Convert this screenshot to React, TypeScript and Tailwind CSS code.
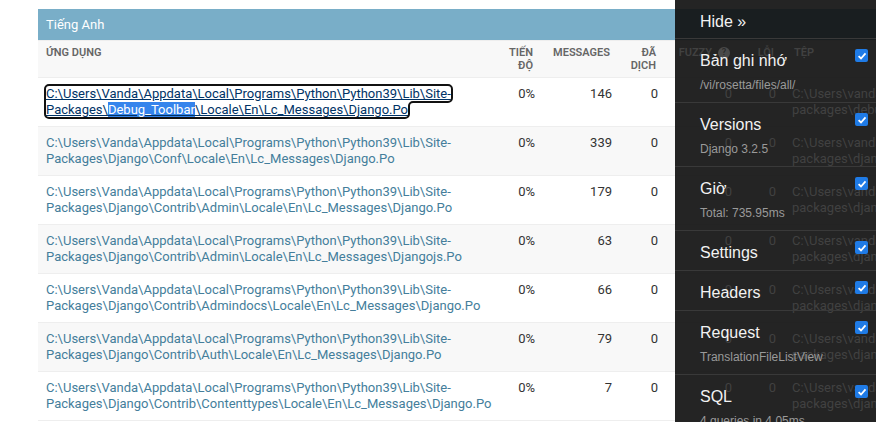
import React from "react";

type Row = {
  line1: string;
  line2: string;
  messages: number;
  lower1: string;
  lower2: string;
};

const prefix = "C:\\Users\\Vanda\\Appdata\\Local\\Programs\\Python\\Python39\\Lib\\Site-";
const lowerPrefix = "C:\\Users\\vanda\\appdata\\local\\programs\\python\\python39\\lib\\site-";

const rows: Row[] = [
  { line1: prefix, line2: "Packages\\Debug_Toolbar\\Locale\\En\\Lc_Messages\\Django.Po", messages: 146, lower1: lowerPrefix, lower2: "packages\\debug_toolbar\\locale\\en\\lc_messages\\django.po" },
  { line1: prefix, line2: "Packages\\Django\\Conf\\Locale\\En\\Lc_Messages\\Django.Po", messages: 339, lower1: lowerPrefix, lower2: "packages\\django\\conf\\locale\\en\\lc_messages\\django.po" },
  { line1: prefix, line2: "Packages\\Django\\Contrib\\Admin\\Locale\\En\\Lc_Messages\\Django.Po", messages: 179, lower1: lowerPrefix, lower2: "packages\\django\\contrib\\admin\\locale\\en\\lc_messages\\django.po" },
  { line1: prefix, line2: "Packages\\Django\\Contrib\\Admin\\Locale\\En\\Lc_Messages\\Djangojs.Po", messages: 63, lower1: lowerPrefix, lower2: "packages\\django\\contrib\\admin\\locale\\en\\lc_messages\\djangojs.po" },
  { line1: prefix, line2: "Packages\\Django\\Contrib\\Admindocs\\Locale\\En\\Lc_Messages\\Django.Po", messages: 66, lower1: lowerPrefix, lower2: "packages\\django\\contrib\\admindocs\\locale\\en\\lc_messages\\django.po" },
  { line1: prefix, line2: "Packages\\Django\\Contrib\\Auth\\Locale\\En\\Lc_Messages\\Django.Po", messages: 79, lower1: lowerPrefix, lower2: "packages\\django\\contrib\\auth\\locale\\en\\lc_messages\\django.po" },
  { line1: prefix, line2: "Packages\\Django\\Contrib\\Contenttypes\\Locale\\En\\Lc_Messages\\Django.Po", messages: 7, lower1: lowerPrefix, lower2: "packages\\django\\contrib\\contenttypes\\locale\\en\\lc_messages\\django.po" },
];

const panels: { title: string; sub?: string; check: boolean }[] = [
  { title: "Bản ghi nhớ", sub: "/vi/rosetta/files/all/", check: true },
  { title: "Versions", sub: "Django 3.2.5", check: true },
  { title: "Giờ", sub: "Total: 735.95ms", check: true },
  { title: "Settings", check: true },
  { title: "Headers", check: true },
  { title: "Request", sub: "TranslationFileListView", check: true },
  { title: "SQL", sub: "4 queries in 4.05ms", check: true },
];

// text that sits under the debug toolbar shows through a little
const ghost = "relative z-20 text-[#414141]";

function Check() {
  return (
    <span className="flex w-[13px] h-[13px] shrink-0 items-center justify-center rounded-[2px] bg-[#1f7be6]">
      <svg width="10" height="10" viewBox="0 0 10 10">
        <path d="M1.6 5.2 L4 7.5 L8.5 2.4" fill="none" stroke="#fff" strokeWidth="1.8" />
      </svg>
    </span>
  );
}

function DebugToolbar() {
  return (
    <>
      <div className="absolute top-0 bottom-0 left-[675px] w-[201px] bg-[#111]/[0.92] z-10" />
      <ul className="absolute top-0 bottom-0 left-[675px] w-[201px] z-30 overflow-hidden font-['Liberation_Sans',Arial,sans-serif]">
        <li className="pl-[25px] pt-[10px] pb-[4px] border-b border-[#393939]">
          <div className="text-[16px] leading-[24px] text-[#f2f2f2]">Hide »</div>
        </li>
        {panels.map((p) => (
          <li key={p.title} className="pl-[25px] pr-[8px] pt-[10px] pb-[5px] border-b border-[#393939]">
            <div className="flex items-start justify-between">
              <span className="text-[16px] leading-[24px] text-[#f2f2f2]">{p.title}</span>
              {p.check && <Check />}
            </div>
            {p.sub && <div className="text-[12px] leading-[24px] text-[#9a9a9a]">{p.sub}</div>}
          </li>
        ))}
      </ul>
    </>
  );
}

export default function App() {
  return (
    <div className="relative w-[879px] h-[422px] overflow-hidden bg-white">
      <div className="w-[876px] h-[422px] overflow-hidden pt-[9px] pl-[38px]">
        <table className="table-fixed border-collapse w-[1346px] font-['Roboto','Liberation_Sans',sans-serif] text-[#333]">
          <colgroup>
            <col className="w-[459px]" />
            <col className="w-[46px]" />
            <col className="w-[77px]" />
            <col className="w-[46px]" />
            <col className="w-[74px]" />
            <col className="w-[44px]" />
            <col className="w-[600px]" />
          </colgroup>
          <caption className="text-left bg-[#79aec8] text-white text-[13px] leading-[15px] px-2 py-2 font-normal">
            Tiếng Anh
          </caption>
          <thead>
            <tr className="bg-[#f8f8f8] text-[11px] leading-[13px] font-semibold uppercase text-[#666] border-t border-b border-[#eee]">
              <th className="text-left pl-2 pr-[10px] py-[5px] align-top font-semibold">Ứng dụng</th>
              <th className="text-right pr-[10px] py-[5px] align-top font-semibold">Tiến<br />độ</th>
              <th className="text-right pr-[10px] py-[5px] align-top font-semibold">Messages</th>
              <th className="text-right pr-[10px] py-[5px] align-top font-semibold">Đã<br />dịch</th>
              <th className="text-right pr-[10px] py-[5px] align-top font-semibold">
                <span className={`${ghost} inline-flex items-center gap-[6px] whitespace-nowrap`}>
                  Fuzzy
                  <span className="inline-flex w-[12px] h-[12px] rounded-full bg-[#4a4a4a] items-center justify-center text-[9px] leading-none text-[#2a2a2a]">?</span>
                </span>
              </th>
              <th className="text-right pr-[10px] py-[5px] align-top font-semibold">
                <span className={ghost}>Lỗi</span>
              </th>
              <th className="text-left pl-[10px] py-[5px] align-top font-semibold">
                <span className={ghost}>Tệp</span>
              </th>
            </tr>
          </thead>
          <tbody className="text-[13px] leading-4">
            {rows.map((r, i) => (
              <tr key={i} className={`border-b border-[#eee] ${i % 2 === 1 ? "bg-[#f8f8f8]" : "bg-white"}`}>
                <td className="px-2 py-2 align-top whitespace-nowrap">
                  {i === 0 ? (
                    <a className="text-[#036] underline outline-2 outline-[#111] rounded-[3px]">
                      {r.line1}
                      <br />
                      Packages\<span className="bg-[#3584ec] text-white">Debug_Toolbar</span>\Locale\En\Lc_Messages\Django.Po
                    </a>
                  ) : (
                    <a className="text-[#447e9b]">
                      {r.line1}
                      <br />
                      {r.line2}
                    </a>
                  )}
                </td>
                <td className="pr-2 py-2 align-top text-right">0%</td>
                <td className="pr-2 py-2 align-top text-right">{r.messages}</td>
                <td className="pr-2 py-2 align-top text-right">0</td>
                <td className="pr-2 py-2 align-top text-right">
                  <span className={ghost}>0</span>
                </td>
                <td className="pr-2 py-2 align-top text-right">
                  <span className={ghost}>0</span>
                </td>
                <td className="pl-2 py-2 align-top whitespace-nowrap">
                  <span className={ghost}>
                    {r.lower1}
                    <br />
                    {r.lower2}
                  </span>
                </td>
              </tr>
            ))}
          </tbody>
        </table>
      </div>
      <DebugToolbar />
    </div>
  );
}
